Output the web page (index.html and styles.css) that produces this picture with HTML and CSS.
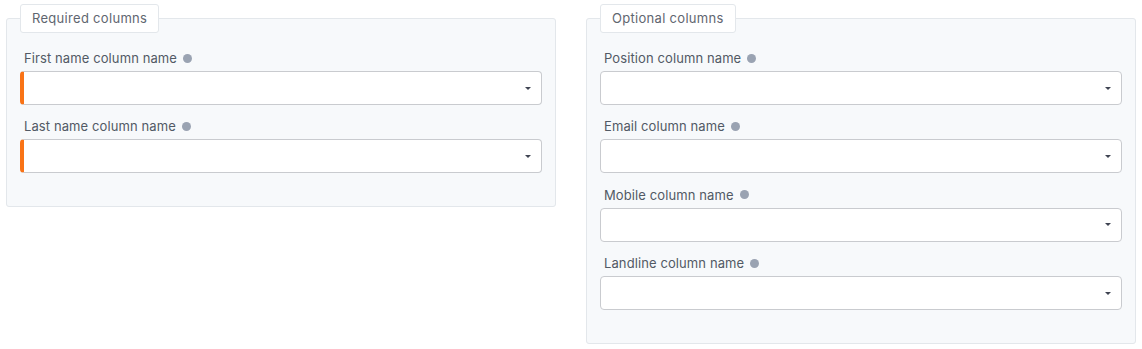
FILE: index.html
```html
<!DOCTYPE html>
<html lang="en">
<head>
    <meta charset="UTF-8">
    <meta name="viewport" content="width=device-width, initial-scale=1.0">
    <title>Column mapping</title>
    <link rel="stylesheet" href="styles.css">
</head>
<body>

    <div class="columns">
        <!-- Required -->
        <fieldset class="group">
            <legend>Required columns</legend>

            <div class="field">
                <label>First name column name <span class="hint"></span></label>
                <div class="select required"><span class="caret"></span></div>
            </div>

            <div class="field">
                <label>Last name column name <span class="hint"></span></label>
                <div class="select required"><span class="caret"></span></div>
            </div>
        </fieldset>

        <!-- Optional -->
        <fieldset class="group">
            <legend>Optional columns</legend>

            <div class="field">
                <label>Position column name <span class="hint"></span></label>
                <div class="select"><span class="caret"></span></div>
            </div>

            <div class="field">
                <label>Email column name <span class="hint"></span></label>
                <div class="select"><span class="caret"></span></div>
            </div>

            <div class="field">
                <label>Mobile column name <span class="hint"></span></label>
                <div class="select"><span class="caret"></span></div>
            </div>

            <div class="field">
                <label>Landline column name <span class="hint"></span></label>
                <div class="select"><span class="caret"></span></div>
            </div>
        </fieldset>
    </div>

</body>
</html>
```

FILE: styles.css
```css
body, html {
    margin: 0;
    padding: 0;
    background: #fff;
    font-family: Inter, "Open Sans", sans-serif;
    color: #4b5563;
}

body {
    padding: 4px 6px;
}

.columns {
    display: grid;
    grid-template-columns: 1fr 1fr;
    gap: 30px;
    align-items: start;
}

.group {
    margin: 0;
    padding: 6px 13px 33px;
    background: #f7f9fb;
    border: 1px solid #e3e7eb;
    border-radius: 3px;
    min-width: 0;
}

.group legend {
    margin-left: 0;
    padding: 0 11px;
    height: 27px;
    line-height: 27px;
    font-size: 13px;
    letter-spacing: 0.3px;
    color: #5f6670;
    background: #fff;
    border: 1px solid #e3e7eb;
    border-radius: 3px;
}

.field {
    margin-top: 11px;
}

.field + .field {
    margin-top: 13.4px;
}

.field label {
    display: flex;
    align-items: center;
    gap: 6px;
    padding-left: 4px;
    height: 16px;
    margin-bottom: 5px;
    font-size: 13px;
    letter-spacing: 0.1px;
    color: #525a65;
}

.hint {
    display: inline-block;
    width: 9px;
    height: 9px;
    border-radius: 50%;
    background: #9aa3b2;
}

.select {
    height: 34px;
    box-sizing: border-box;
    background: #fff;
    border: 1px solid #c9cbcf;
    border-radius: 4px;
    display: flex;
    align-items: center;
    justify-content: flex-end;
    padding-right: 10px;
}

.select.required {
    border-left: 4px solid #f97316;
}

.caret {
    width: 0;
    height: 0;
    border-left: 3px solid transparent;
    border-right: 3px solid transparent;
    border-top: 3px solid #3f4452;
}
```
